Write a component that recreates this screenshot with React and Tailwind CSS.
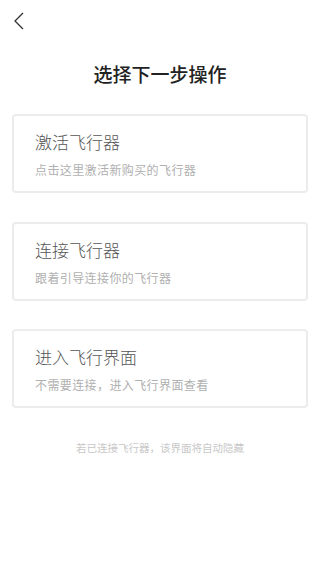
export default function App() {
  const options = [
    { title: '激活飞行器', desc: '点击这里激活新购买的飞行器' },
    { title: '连接飞行器', desc: '跟着引导连接你的飞行器' },
    { title: '进入飞行界面', desc: '不需要连接，进入飞行界面查看' },
  ]

  return (
    <div
      className="w-[320px] h-[569px] bg-white flex flex-col"
      style={{ fontFamily: '"Noto Sans CJK SC", "Noto Sans", sans-serif' }}
    >
      {/* HEADER */}
      <div className="h-[42px] pl-[13px] pt-[12px]">
        <svg width="12" height="18" viewBox="0 0 12 18" fill="none">
          <path d="M10 1 L2 9 L10 17" stroke="#333" strokeWidth="1.3" />
        </svg>
      </div>

      <h1 className="text-center text-[19px] leading-[24px] font-medium text-[#222] mt-[20px]">
        选择下一步操作
      </h1>

      {/* OPTIONS */}
      <div className="mt-[28px] px-[12px] flex flex-col gap-[28.5px]">
        {options.map((item, index) => (
          <div
            key={index}
            className="h-[79px] border-2 border-[#ececec] rounded-[4px] px-[21px] pt-[14px]"
          >
            <div className="text-[17px] leading-[24px] font-light text-[#555]">
              {item.title}
            </div>
            <div className="mt-[8px] text-[12px] leading-[16px] tracking-[0.4px] text-[#b0b0b0]">
              {item.desc}
            </div>
          </div>
        ))}
      </div>

      <p className="mt-[33px] text-center text-[10.5px] leading-[14px] text-[#c8c8c8]">
        若已连接飞行器，该界面将自动隐藏
      </p>
    </div>
  )
}
